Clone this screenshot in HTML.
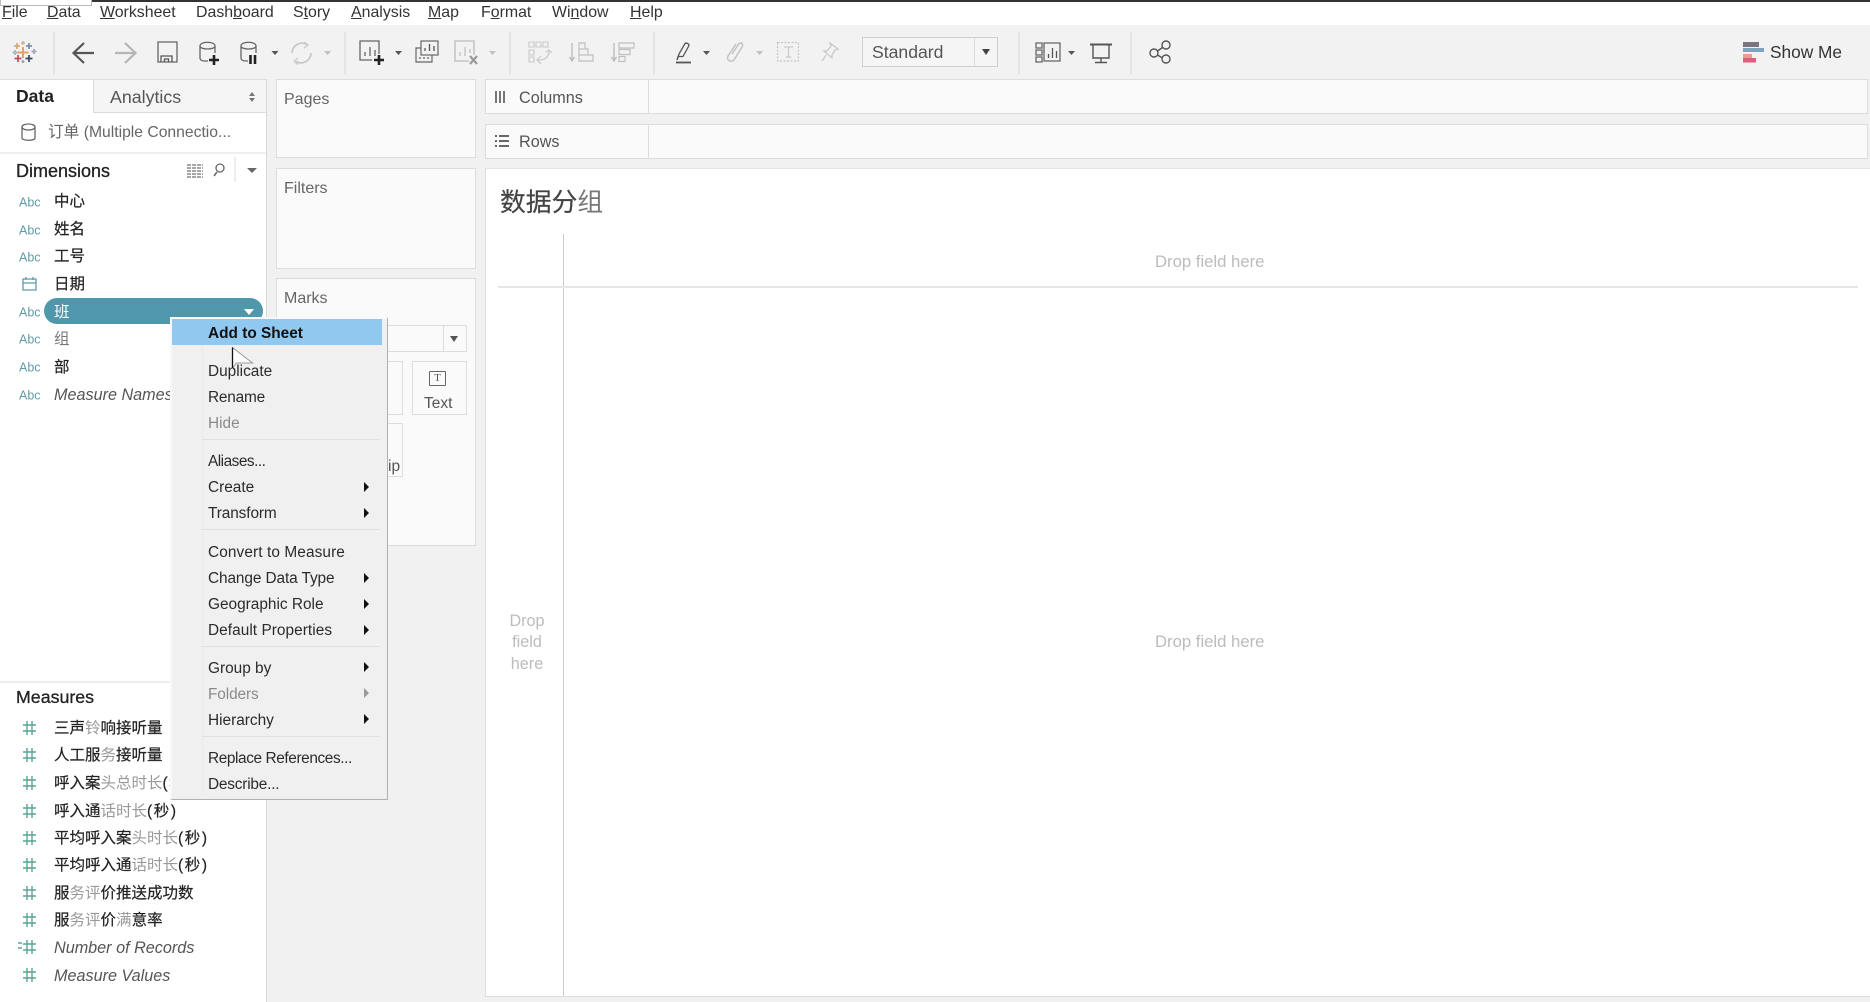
<!DOCTYPE html>
<html><head><meta charset="utf-8"><style>
html,body{margin:0;padding:0;width:1870px;height:1002px;overflow:hidden;background:#f1f1f1}
#r{position:relative;width:1870px;height:1002px;overflow:hidden;filter:blur(.35px);font-family:"Liberation Sans","Noto Sans CJK SC",sans-serif;color:#333}
.a{position:absolute}
.t{position:absolute;white-space:nowrap;line-height:20px;height:20px}
.m{font-size:15.9px;top:3px;color:#333}
.card{position:absolute;background:#fafafa;border:1px solid #ddd;box-sizing:border-box}
.lb{font-size:16px;color:#666;transform:translateY(1.2px)}
.f{font-size:15.5px;left:54px;color:#222;transform:translateY(1.2px);-webkit-text-stroke:.2px #222}
.i{font-style:italic;color:#555;font-size:16.2px;-webkit-text-stroke:0}
.l{color:#999;-webkit-text-stroke:0}
.p{letter-spacing:1.6px}
.abc{font-size:12.5px;left:19px;color:#5f9ba6;transform:translateY(.6px)}
.it{left:208px;font-size:15.4px;color:#2b2b2b;transform:translateY(1.2px)}
.d{color:#8b8b8b}
.sep{position:absolute;left:202px;width:178px;height:1px;background:#e0e0e0}
.arr{position:absolute;left:364px;width:0;height:0;border-left:5px solid #111;border-top:5px solid transparent;border-bottom:5px solid transparent}
.drop{color:#bcbcbc;font-size:16.7px}
</style></head><body><div id="r">
<div class="a" style="left:0;top:0;width:1870px;height:30px;background:#fff"></div>
<div class="a" style="left:0;top:25px;width:1870px;height:54px;background:#f2f2f3"></div>
<div class="a" style="left:0;top:0;width:1870px;height:1.5px;background:#333"></div>
<div class="a" style="left:0;top:0;width:92px;height:6px;background:#fff;border:1px solid #bbb;border-top:0;box-sizing:border-box"></div>

<span class="t m" style="left:2px"><u>F</u>ile</span>
<span class="t m" style="left:47px"><u>D</u>ata</span>
<span class="t m" style="left:100px"><u>W</u>orksheet</span>
<span class="t m" style="left:196px">Dash<u>b</u>oard</span>
<span class="t m" style="left:293px">S<u>t</u>ory</span>
<span class="t m" style="left:351px"><u>A</u>nalysis</span>
<span class="t m" style="left:428px"><u>M</u>ap</span>
<span class="t m" style="left:481px">F<u>o</u>rmat</span>
<span class="t m" style="left:552px">Wi<u>n</u>dow</span>
<span class="t m" style="left:630px"><u>H</u>elp</span>

<svg class="a" style="left:0;top:0" width="1870" height="79" fill="none" stroke-width="1.5">
<g stroke-width="1.7">
<path d="M23 41v4M21 43h4" stroke="#d9b48f"/><path d="M17 43v6M14 46h6" stroke="#d8a679"/><path d="M29 43v6M26 46h6" stroke="#7d8fa8"/><path d="M34 49v5M31.500 51.500h5" stroke="#9aa8b8"/>
<path d="M23 47v11M17.500 52.500h11" stroke="#e8a06a" stroke-width="2"/><path d="M15 50v5M12.500 52.500h5" stroke="#a9b4c0"/>
<path d="M18 55v7M14.500 58.500h7" stroke="#c8495a"/><path d="M29 55v7M25.500 58.500h7" stroke="#3d4a5c"/><path d="M23 60v3M21.500 61.500h3" stroke="#9aa"/>
</g>
<path d="M54 32V74M345 32V74M510 32V74M654 32V74M1019 32V74M1131 32V74" stroke="#dcdcdc" stroke-width="1.200"/>
<path d="M94 53H74M84 43L73.500 53 84 63" stroke="#555" stroke-width="2.200"/>
<path d="M115 53H135M125 43l10.500 10L125 63" stroke="#b5b5b5" stroke-width="2.200"/>
<path d="M158 62V42h19v20z" stroke="#666" stroke-width="1.300"/><path d="M161 62v-6h11v6M164.500 62v-3h4v3" stroke="#555" stroke-width="1.300"/>
<path d="M208 61h-3c-3 0-5-1-5-3V46c0-5 15-5 15 0v7M200 46c0 4 15 4 15 0" stroke="#666" stroke-width="1.300"/><path d="M214 55v10M209 60h10" stroke="#222" stroke-width="2.600"/>
<path d="M248 61h-2c-3 0-5-1-5-3V46c0-5 15-5 15 0v7M241 46c0 4 15 4 15 0" stroke="#666" stroke-width="1.300"/><path d="M250.500 55v9M255 55v9" stroke="#222" stroke-width="2.600"/>
<path d="M271.500 51h7l-3.500 4z" fill="#555" stroke="none"/>
<path d="M292 53a10 10 0 0 1 15-8.500M311 53a10 10 0 0 1-15 8.500" stroke="#c8c8c8" stroke-width="1.700"/><path d="M304 42l4 3-4 3M298 58l-4 3.500 4 3" stroke="#c8c8c8" stroke-width="1.200"/>
<path d="M324 51h7l-3.500 4z" fill="#c0c0c0" stroke="none"/>
<path d="M372 60h-12V41h19v13" stroke="#666" stroke-width="1.300"/><path d="M365 56v-4M370 56v-9M375 56v-6" stroke="#666" stroke-width="1.300"/><path d="M379 55v10M374 60h10" stroke="#222" stroke-width="2.600"/>
<path d="M395 51h7l-3.500 4z" fill="#555" stroke="none"/>
<rect x="421" y="41" width="17" height="14" stroke="#666" stroke-width="1.200"/><path d="M425 51v-3M429.500 51v-7M434 51v-5" stroke="#555" stroke-width="1.300"/><path d="M421 48h-5v14h16v-7M419 58h2M423 58h2M427 58h2" stroke="#666" stroke-width="1.200"/>
<path d="M469 61h-14V41h19v14" stroke="#bbb" stroke-width="1.300"/><path d="M460 56v-4M465 56v-9M470 53v-4" stroke="#c0c0c0" stroke-width="1.300"/><path d="M470 56l7 8M477 56l-7 8" stroke="#999" stroke-width="2.200"/>
<path d="M489 51h7l-3.500 4z" fill="#c0c0c0" stroke="none"/>
<path d="M529 42h5v5h-5zM536 42h5v5h-5zM543 42h5v5h-5zM529 50h5v5h-5zM529 57h5v5h-5z" stroke="#c8c8c8" stroke-width="1.100"/><path d="M537 60c7 1 12-3 12-9M541 56l-4 4 4 4M546 52l3-2 3 3" stroke="#c8c8c8" stroke-width="1.200"/>
<path d="M572 43v18M569.500 57l2.500 4 2.500-4" stroke="#bbb" stroke-width="1.300"/><path d="M579 43h6v6h-6zM579 49h9v6h-9zM579 55h14v6h-14z" stroke="#c0c0c0" stroke-width="1.200"/>
<path d="M614 43v18M611.500 57l2.500 4 2.500-4" stroke="#bbb" stroke-width="1.300"/><path d="M619 43h15v5h-15zM619 49.500h11v5h-11zM619 56.500h6v5h-6z" stroke="#c0c0c0" stroke-width="1.200"/>
<path d="M678 57l1-3 6-10.500c1-1 4 0 4 2l-6 11h-5z" stroke="#555" stroke-width="1.300"/><path d="M676 62.500h15" stroke="#555" stroke-width="1.800"/><path d="M678 57l-1 3" stroke="#555"/>
<path d="M703 51h7l-3.500 4z" fill="#555" stroke="none"/>
<path d="M732 54l6-9c3-4 6-1 4 2l-8 13c-3 3-8 0-6-4l8-12" stroke="#c0c0c0" stroke-width="1.400"/>
<path d="M756 51h7l-3.500 4z" fill="#c0c0c0" stroke="none"/>
<rect x="777.500" y="42.500" width="21" height="18.500" stroke="#c4c4c4" stroke-dasharray="2 1.500" stroke-width="1.200"/><path d="M784 47h9M788.500 47v10M786 57h5" stroke="#c8c8c8" stroke-width="1.200"/>
<path d="M830 43l8 6-3 1-3 5 0 3-8-7 3 0 4-5zM826 55l-4 6" stroke="#c8c8c8" stroke-width="1.300"/>
<path d="M1036 43h6v5h-6zM1036 50h6v5h-6zM1036 57h6v5h-6zM1044 43h16v18h-16z" stroke="#666" stroke-width="1.300"/><path d="M1048.500 58v-4M1052.500 58v-10M1056.500 58v-7" stroke="#555" stroke-width="1.300"/>
<path d="M1068 51h7l-3.500 4z" fill="#555" stroke="none"/>
<path d="M1090 44.500h22" stroke="#555" stroke-width="2"/><path d="M1093 44v14h16V44M1101 58v4M1095 62.500h12" stroke="#555" stroke-width="1.400"/>
<circle cx="1154" cy="53" r="4" stroke="#555" stroke-width="1.400"/><circle cx="1166" cy="45" r="4" stroke="#555" stroke-width="1.400"/><circle cx="1166" cy="59" r="4" stroke="#555" stroke-width="1.400"/><path d="M1157.500 51l5-3.500M1157.500 55l5 3" stroke="#555" stroke-width="1.400"/>
<rect x="1743" y="42" width="16" height="5" fill="#7a7580" stroke="none"/><rect x="1743" y="48" width="21" height="4" fill="#7ea3bf" stroke="none"/><rect x="1743" y="54" width="9" height="4" fill="#ec9d90" stroke="none"/><rect x="1743" y="58" width="13" height="4.500" fill="#dd5f7f" stroke="none"/>
</svg>

<div class="a" style="left:862px;top:37px;width:136px;height:30px;background:#f5f5f5;border:1px solid #cfcfcf;box-sizing:border-box"></div>
<div class="a" style="left:974px;top:38px;width:1px;height:28px;background:#ddd"></div>
<div class="a" style="left:982px;top:49px;border-top:6px solid #444;border-left:4.500px solid transparent;border-right:4.500px solid transparent"></div>
<span class="t" style="left:872px;top:42px;font-size:17.600px;color:#555">Standard</span>
<span class="t" style="left:1770px;top:42px;font-size:17.300px;color:#333">Show Me</span>

<!-- left panel -->
<div class="a" style="left:0;top:79px;width:266px;height:923px;background:#fff;border-right:1px solid #d8d8d8"></div>
<div class="a" style="left:93px;top:79px;width:173px;height:34px;background:#f5f5f5;border-left:1px solid #ddd;border-bottom:1px solid #ddd;box-sizing:border-box"></div>
<div class="a" style="left:0;top:79px;width:267px;height:1px;background:#ddd"></div>
<span class="t" style="left:16px;top:86px;font-size:17.500px;font-weight:bold;color:#222">Data</span>
<span class="t" style="left:110px;top:87px;font-size:17.800px;color:#555">Analytics</span>
<div class="a" style="left:249px;top:92px;border-bottom:4px solid #777;border-left:3px solid transparent;border-right:3px solid transparent"></div>
<div class="a" style="left:249px;top:98px;border-top:4px solid #777;border-left:3px solid transparent;border-right:3px solid transparent"></div>
<svg class="a" style="left:20px;top:123px" width="20" height="20" fill="none" stroke="#666" stroke-width="1.300"><path d="M2 4c0-4 13-4 13 0v11c0 3-13 3-13 0zM2 4c0 4 13 4 13 0"/></svg>
<span class="t" style="left:48px;top:123px;font-size:15.700px;color:#666">订单 (Multiple Connectio...</span>
<div class="a" style="left:0;top:152px;width:266px;height:2px;background:#eee"></div>
<span class="t" style="left:16px;top:161px;font-size:18px;color:#222;-webkit-text-stroke:.3px #222">Dimensions</span>
<svg class="a" style="left:185px;top:155px" width="80" height="30" fill="none" stroke="#888"><path d="M2 10h16M2 13h16M2 16h16M2 19h16M2 22h16" stroke-dasharray="4 1" stroke-width="1.500"/><circle cx="35" cy="13" r="4" stroke="#666" stroke-width="1.300"/><path d="M32 17l-3 4" stroke="#666" stroke-width="1.500"/><path d="M50 2v25" stroke="#ddd"/></svg>
<div class="a" style="left:247px;top:168px;border-top:5px solid #666;border-left:5px solid transparent;border-right:5px solid transparent"></div>

<span class="t abc" style="top:192px">Abc</span><span class="t f" style="top:191px">中心</span>
<span class="t abc" style="top:220px">Abc</span><span class="t f" style="top:219px">姓名</span>
<span class="t abc" style="top:247px">Abc</span><span class="t f" style="top:246px">工号</span>
<svg class="a" style="left:21px;top:276px" width="18" height="16" fill="none" stroke="#5f9ba6" stroke-width="1.300"><path d="M2 3h13v11H2zM2 7h13M5 1v3M12 1v3"/></svg>
<span class="t f" style="top:274px">日期</span>
<span class="t abc" style="top:302px">Abc</span>
<div class="a" style="left:44px;top:298px;width:219px;height:26px;border-radius:13px;background:#4f97ab"></div>
<span class="t f" style="top:302px;color:#fff;-webkit-text-stroke:0">班</span>
<div class="a" style="left:244px;top:309px;border-top:6px solid #fff;border-left:5px solid transparent;border-right:5px solid transparent"></div>
<span class="t abc" style="top:329px">Abc</span><span class="t f" style="top:329px;color:#777;-webkit-text-stroke:0">组</span>
<span class="t abc" style="top:357px">Abc</span><span class="t f" style="top:357px">部</span>
<span class="t abc" style="top:385px">Abc</span><span class="t f i" style="top:384px">Measure Names</span>

<div class="a" style="left:0;top:681px;width:170px;height:2px;background:#eee"></div>
<span class="t" style="left:16px;top:687px;font-size:17.800px;color:#222;-webkit-text-stroke:.3px #222">Measures</span>
<svg class="a" style="left:0;top:698px" width="50" height="300" fill="none" stroke="#5aa594" stroke-width="1.400">
<path d="M27 23v14M32 23v14M23 27h13M23 33h13"/>
<path d="M27 50v14M32 50v14M23 54h13M23 60h13M27 78v14M32 78v14M23 82h13M23 88h13M27 106v14M32 106v14M23 110h13M23 116h13M27 133v14M32 133v14M23 137h13M23 143h13M27 160v14M32 160v14M23 164h13M23 170h13M27 188v14M32 188v14M23 192h13M23 198h13M27 215v14M32 215v14M23 219h13M23 225h13M27 242v14M32 242v14M23 246h13M23 252h13M18 245h4M18 250h4M27 270v14M32 270v14M23 274h13M23 280h13"/></svg>
<span class="t f" style="top:718px">三声<span class="l">铃</span>响接听量</span>
<span class="t f" style="top:745px">人工服<span class="l">务</span>接听量</span>
<span class="t f" style="top:773px">呼入案<span class="l">头总时长</span><span class="p">(秒)</span></span>
<span class="t f" style="top:801px">呼入通<span class="l">话时长</span><span class="p">(秒)</span></span>
<span class="t f" style="top:828px">平均呼入案<span class="l">头时长</span><span class="p">(秒)</span></span>
<span class="t f" style="top:855px">平均呼入通<span class="l">话时长</span><span class="p">(秒)</span></span>
<span class="t f" style="top:883px">服<span class="l">务评</span>价推送成功数</span>
<span class="t f" style="top:910px">服<span class="l">务评</span>价<span class="l">满</span>意率</span>
<span class="t f i" style="top:937px">Number of Records</span>
<span class="t f i" style="top:965px">Measure Values</span>

<!-- cards -->
<div class="card" style="left:276px;top:79px;width:200px;height:79px"></div>
<div class="card" style="left:276px;top:168px;width:200px;height:101px"></div>
<div class="card" style="left:276px;top:278px;width:200px;height:268px"></div>
<span class="t lb" style="left:284px;top:89px">Pages</span>
<span class="t lb" style="left:284px;top:178px">Filters</span>
<span class="t lb" style="left:284px;top:288px">Marks</span>
<div class="a" style="left:284px;top:325px;width:183px;height:27px;border:1px solid #ddd;box-sizing:border-box"></div>
<div class="a" style="left:443px;top:326px;width:1px;height:25px;background:#ddd"></div>
<div class="a" style="left:450px;top:336px;border-top:6px solid #555;border-left:4.500px solid transparent;border-right:4.500px solid transparent"></div>
<div class="a" style="left:347px;top:361px;width:56px;height:54px;border:1px solid #ddd;box-sizing:border-box"></div>
<div class="a" style="left:412px;top:361px;width:55px;height:54px;border:1px solid #ddd;box-sizing:border-box"></div>
<div class="a" style="left:347px;top:423px;width:56px;height:54px;border:1px solid #ddd;box-sizing:border-box"></div>
<div class="a" style="left:429px;top:371px;width:17px;height:15px;border:1px solid #666;box-sizing:border-box;border-radius:1px;font:11px/13px 'Liberation Serif',serif;text-align:center;color:#555">T</div>
<span class="t" style="left:424px;top:394px;font-size:15.500px;color:#555">Text</span>
<span class="t" style="left:388px;top:457px;font-size:15.500px;color:#555">ip</span>

<div class="card" style="left:485px;top:79px;width:1383px;height:35px"></div>
<div class="card" style="left:485px;top:124px;width:1383px;height:35px"></div>
<div class="a" style="left:648px;top:80px;width:1px;height:34px;background:#ddd"></div>
<div class="a" style="left:648px;top:125px;width:1px;height:34px;background:#ddd"></div>
<div class="a" style="left:495px;top:91px;width:2px;height:12px;background:#777"></div>
<div class="a" style="left:499px;top:91px;width:2px;height:12px;background:#777"></div>
<div class="a" style="left:503px;top:91px;width:2px;height:12px;background:#777"></div>
<svg class="a" style="left:494px;top:134px" width="16" height="14" stroke="#666" stroke-width="2"><path d="M1 2h2M5 2h10M1 7h2M5 7h10M1 12h2M5 12h10"/></svg>
<span class="t" style="left:519px;top:88px;font-size:16.200px;color:#555">Columns</span>
<span class="t" style="left:519px;top:132px;font-size:16.200px;color:#555">Rows</span>

<div class="a" style="left:485px;top:168px;width:1385px;height:829px;background:#fff;border-left:1.500px solid #ddd;border-top:1.500px solid #e4e4e4;border-bottom:1.500px solid #ddd;box-sizing:border-box"></div>
<span class="t" style="left:500px;top:188px;height:30px;line-height:30px;font-size:25.800px;color:#444;-webkit-text-stroke:.2px #444">数据分<span style="color:#777;-webkit-text-stroke:0">组</span></span>
<div class="a" style="left:563px;top:234px;width:1px;height:762px;background:#ccc"></div>
<div class="a" style="left:498px;top:286px;width:1360px;height:1.500px;background:#e6e6e6"></div>
<span class="t drop" style="left:1155px;top:252px">Drop field here</span>
<span class="t drop" style="left:1155px;top:632px">Drop field here</span>
<span class="t drop" style="left:497px;top:611px;width:60px;text-align:center;font-size:16.200px">Drop</span>
<span class="t drop" style="left:497px;top:632px;width:60px;text-align:center;font-size:16.200px">field</span>
<span class="t drop" style="left:497px;top:654px;width:60px;text-align:center;font-size:16.200px">here</span>

<!-- context menu -->
<div class="a" style="left:170px;top:317px;width:218px;height:483px;background:#f0f0f0;border-left:2px solid #f8f8f8;border-top:2px solid #f8f8f8;border-right:1.500px solid #b0b0b0;border-bottom:1.500px solid #b0b0b0;box-sizing:border-box"></div>
<div class="a" style="left:172px;top:319px;width:210px;height:26px;background:#90c8f0"></div>
<div class="a" style="left:202px;top:346px;width:1px;height:450px;background:#eaeaea"></div>
<span class="t it" style="top:323px;font-weight:bold;color:#111;font-size:15.400px">Add to Sheet</span>
<span class="t it" style="top:361px">Duplicate</span>
<span class="t it" style="top:387px;letter-spacing:-.2px">Rename</span>
<span class="t it d" style="top:413px">Hide</span>
<div class="sep" style="top:439px"></div>
<span class="t it" style="top:451px;letter-spacing:-.5px">Aliases...</span>
<span class="t it" style="top:477px">Create</span><div class="arr" style="top:482px"></div>
<span class="t it" style="top:503px;letter-spacing:-.1px">Transform</span><div class="arr" style="top:508px"></div>
<div class="sep" style="top:529px"></div>
<span class="t it" style="top:542px;letter-spacing:.1px">Convert to Measure</span>
<span class="t it" style="top:568px;letter-spacing:-.1px">Change Data Type</span><div class="arr" style="top:573px"></div>
<span class="t it" style="top:594px">Geographic Role</span><div class="arr" style="top:599px"></div>
<span class="t it" style="top:620px;letter-spacing:.05px">Default Properties</span><div class="arr" style="top:625px"></div>
<div class="sep" style="top:646px"></div>
<span class="t it" style="top:658px">Group by</span><div class="arr" style="top:662px"></div>
<span class="t it d" style="top:684px;letter-spacing:-.1px">Folders</span><div class="arr" style="top:688px;border-left-color:#999"></div>
<span class="t it" style="top:710px">Hierarchy</span><div class="arr" style="top:714px"></div>
<div class="sep" style="top:736px"></div>
<span class="t it" style="top:748px;letter-spacing:-.4px">Replace References...</span>
<span class="t it" style="top:774px;letter-spacing:-.2px">Describe...</span>

<svg class="a" style="left:228px;top:344px" width="26" height="32"><path d="M4.500 3.500V24l4-5 7 0 9 0z" fill="#fff" fill-opacity=".85" stroke="#999"/><path d="M4.500 3.500V24" stroke="#111" stroke-width="1.300"/></svg>
</div></body></html>
